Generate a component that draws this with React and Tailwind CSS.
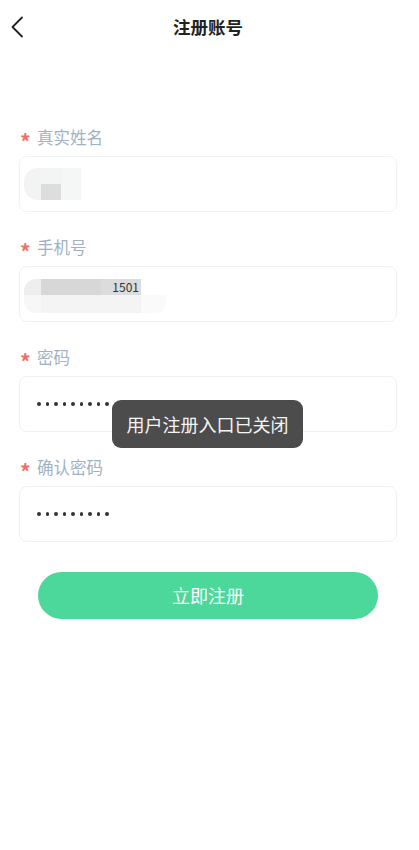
const cjk = { fontFamily: '"Noto Sans CJK SC", "Noto Sans", sans-serif' };

function Label({ children }) {
  return (
    <div className="flex h-[22px] items-center pl-px">
      <span className="mr-[7px] mt-[8px] w-[10px] text-[21px] font-bold leading-none text-[#f56c6c]">*</span>
      <span className="text-[16.5px] leading-[22px] text-[#a1b1c3]">{children}</span>
    </div>
  );
}

function Field({ label, children }) {
  return (
    <div className="mb-[24px]">
      <Label>{label}</Label>
      <div className="mt-[8px] flex h-[56px] items-center rounded-[8px] border border-[#edf1f5] bg-white pl-[4px]">
        {children}
      </div>
    </div>
  );
}

function Dots() {
  return (
    <div className="ml-[13px] flex items-center gap-[5px]">
      {Array.from({ length: 9 }).map((_, i) => (
        <span key={i} className="h-[3.5px] w-[3.5px] rounded-full bg-[#333]" />
      ))}
    </div>
  );
}

export default function App() {
  return (
    <div className="relative min-h-[850px] w-[419px] bg-white" style={cjk}>
      {/* 顶部 */}
      <div className="relative flex h-[54px] items-center justify-center pr-[3px]">
        <button className="absolute left-[10px] top-[16px] p-0">
          <svg width="14" height="22" viewBox="0 0 14 22" fill="none">
            <path d="M12 1.5L2.5 11L12 20.5" stroke="#222" strokeWidth="1.8" strokeLinecap="round" strokeLinejoin="round" />
          </svg>
        </button>
        <h1 className="text-[17.5px] font-bold text-[#222]">注册账号</h1>
      </div>

      {/* 表单 */}
      <div className="mt-[72px] pl-[19px] pr-[22px]">
        <Field label="真实姓名">
          <div className="grid grid-cols-[17px_20px_20px] grid-rows-[16px_16px]">
            <div className="rounded-tl-[14px] bg-[#f2f3f3]" />
            <div className="bg-[#f3f4f4]" />
            <div className="bg-[#f5f6f6]" />
            <div className="rounded-bl-[14px] bg-[#f2f3f3]" />
            <div className="bg-[#dcdddc]" />
            <div className="bg-[#f5f6f6]" />
          </div>
        </Field>

        <Field label="手机号">
          <div className="flex flex-col pt-[3px]">
            <div className="flex h-[16px] items-center">
              <div className="h-full w-[17px] rounded-tl-[12px] bg-[#eeeeee]" />
              <div className="h-full w-[60px] bg-[#d6d7d6]" />
              <div className="flex h-full w-[40px] items-center justify-end bg-[#dcdcdc] pr-[2px] text-[12px] leading-none text-[#333]">
                1501
              </div>
            </div>
            <div className="flex h-[18px]">
              <div className="w-[17px] rounded-bl-[12px] bg-[#f7f7f7]" />
              <div className="w-[100px] bg-[#f4f4f4]" />
              <div className="w-[25px] rounded-br-[10px] bg-[#fafafa]" />
            </div>
          </div>
        </Field>

        <Field label="密码">
          <Dots />
        </Field>

        <Field label="确认密码">
          <Dots />
        </Field>

        <div className="mt-[30px] px-[19px]">
          <button className="flex h-[47px] w-full items-center justify-center rounded-full bg-[#4cd89b] text-[18px] text-white">
            立即注册
          </button>
        </div>
      </div>

      {/* 提示 */}
      <div className="absolute left-[112px] top-[400px] flex h-[48px] w-[191px] items-center justify-center rounded-[9px] bg-[#4c4c4c] text-[18px] text-[#f5f5f5]">
        用户注册入口已关闭
      </div>
    </div>
  );
}
